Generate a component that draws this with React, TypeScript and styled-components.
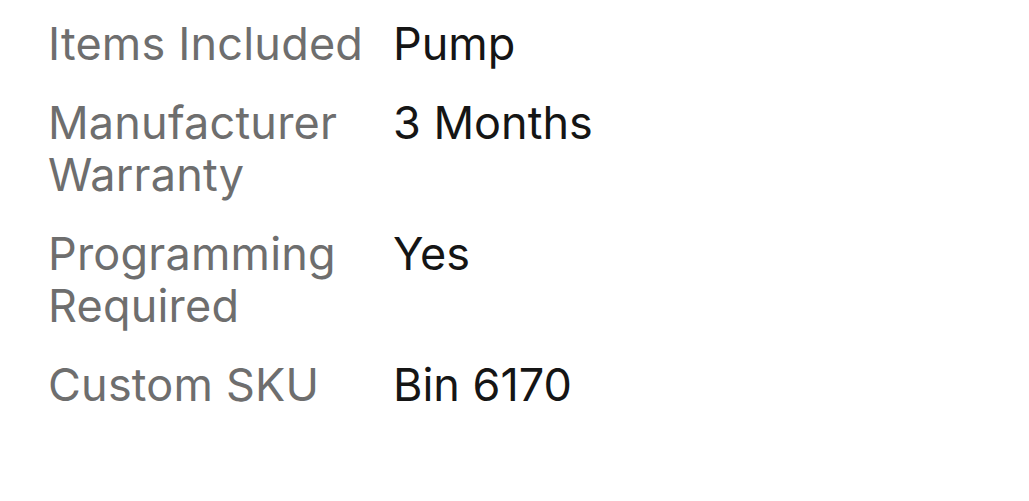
import styled, { createGlobalStyle } from 'styled-components';

const GlobalStyle = createGlobalStyle`
  html, body {
    margin: 0;
    padding: 0;
    background: #ffffff;
  }
  body {
    font-family: Inter, "Liberation Sans", sans-serif;
  }
`;

const specs = [
  { label: 'Items Included', value: 'Pump' },
  { label: 'Manufacturer Warranty', value: '3 Months' },
  { label: 'Programming Required', value: 'Yes' },
  { label: 'Custom SKU', value: 'Bin 6170' },
];

export default function App() {
  return (
    <>
      <GlobalStyle />
      <SpecList>
        {specs.map(({ label, value }) => (
          <SpecRow key={label}>
            <SpecLabel>{label}</SpecLabel>
            <SpecValue>{value}</SpecValue>
          </SpecRow>
        ))}
      </SpecList>
    </>
  );
}

const SpecList = styled.dl`
  display: flex;
  flex-direction: column;
  gap: 27px;
  margin: 0;
  padding: 18px 0 0 48px;
`;

const SpecRow = styled.div`
  display: grid;
  grid-template-columns: 335px 1fr;
  column-gap: 10px;
  font-size: 45px;
  line-height: 52px;
`;

const SpecLabel = styled.dt`
  color: #6e6e6e;
  letter-spacing: 0.2px;
`;

const SpecValue = styled.dd`
  margin: 0;
  color: #151515;
`;
